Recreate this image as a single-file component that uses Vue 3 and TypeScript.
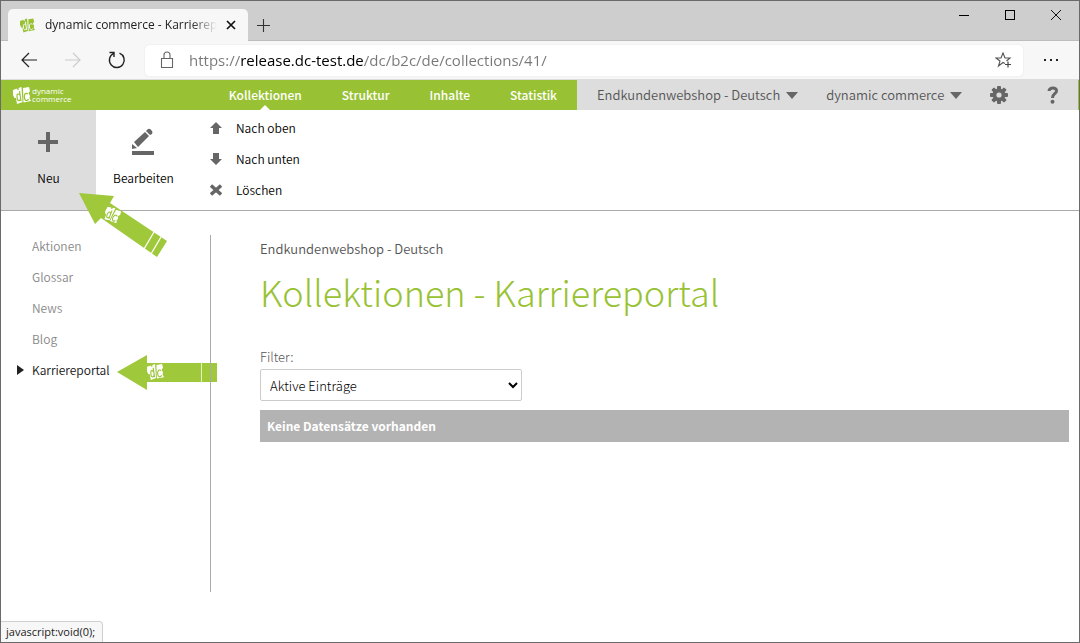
<script setup lang="ts">
import { ref } from 'vue'

const navItems: string[] = ['Kollektionen', 'Struktur', 'Inhalte', 'Statistik']
const activeNav = ref('Kollektionen')

const collections: string[] = ['Aktionen', 'Glossar', 'News', 'Blog', 'Karriereportal']
const activeCollection = ref('Karriereportal')

const url = ref('https://release.dc-test.de/dc/b2c/de/collections/41/')
const filter = ref('active')
</script>

<template>
  <div class="window">
    <svg class="defs" aria-hidden="true">
      <symbol id="dc-mark" viewBox="0 0 18 17">
        <path class="mark-fill" d="M0 3 L4 1.500 L4.500 3 L6 2.500 L5.500 1 L8.500 0 L9.500 15 L4 17 L3 11 L1.500 11 L0 8 Z" />
        <path class="mark-fill" d="M10 1 L16 0 L17 4 L15.500 6 L17 9 L16.500 11 L18 14 L10.500 15.500 Z" />
        <path class="mark-cut" d="M6.500 4 L8 14 M7 8 C4 5.500 3.500 8 4.300 12 C5 14.500 7 14 7.500 12" />
        <path class="mark-cut" d="M15 7 C12 5 10.800 8 11.500 11.500 C12.500 14.500 14.500 14 15.500 12" />
      </symbol>
    </svg>

    <header class="tabstrip">
      <div class="tab">
        <svg class="favicon" width="15" height="15"><use href="#dc-mark" /></svg>
        <span class="tab-title">dynamic commerce - Karriereportal</span>
        <button class="icon-btn tab-close" aria-label="Tab schließen">
          <svg width="10" height="10" viewBox="0 0 10 10"><path d="M1 1 L9 9 M9 1 L1 9" stroke="#111" stroke-width="1.7" /></svg>
        </button>
      </div>
      <button class="icon-btn new-tab" aria-label="Neuer Tab">
        <svg width="13" height="13" viewBox="0 0 13 13"><path d="M6.500 0 V13 M0 6.500 H13" stroke="#333" stroke-width="1.1" /></svg>
      </button>
      <div class="window-controls">
        <button class="icon-btn" aria-label="Minimieren">
          <svg width="12" height="12" viewBox="0 0 12 12"><path d="M1 6.500 H11" stroke="#000" /></svg>
        </button>
        <button class="icon-btn" aria-label="Maximieren">
          <svg width="12" height="12" viewBox="0 0 12 12"><rect x="1.500" y="1.500" width="9" height="9" fill="none" stroke="#000" /></svg>
        </button>
        <button class="icon-btn" aria-label="Schließen">
          <svg width="12" height="12" viewBox="0 0 12 12"><path d="M1 1 L11 11 M11 1 L1 11" stroke="#111" /></svg>
        </button>
      </div>
    </header>

    <div class="toolbar">
      <button class="icon-btn" aria-label="Zurück">
        <svg width="18" height="16" viewBox="0 0 18 16"><path d="M17 8 H2 M9 1 L2 8 L9 15" fill="none" stroke="#222" stroke-width="1.2" /></svg>
      </button>
      <button class="icon-btn" aria-label="Vorwärts" disabled>
        <svg width="18" height="16" viewBox="0 0 18 16"><path d="M1 8 H16 M9 1 L16 8 L9 15" fill="none" stroke="#ccc" stroke-width="1.2" /></svg>
      </button>
      <button class="icon-btn" aria-label="Neu laden">
        <svg width="18" height="18" viewBox="0 0 18 18"><path d="M11.500 2.200 A7.400 7.400 0 1 1 5.500 2.500 M1.500 1.500 H6 V6" fill="none" stroke="#222" stroke-width="1.400" /></svg>
      </button>
      <div class="address">
        <svg width="14" height="18" viewBox="0 0 14 18"><path d="M1.500 7.500 H12.500 V16.500 H1.500 Z M4 7 V4 A3 3 0 0 1 10 4 V7" fill="none" stroke="#666" stroke-width="1.1" /></svg>
        <input v-model="url" class="url" type="text" aria-label="Adresse" spellcheck="false" />
        <button class="icon-btn" aria-label="Zu Favoriten hinzufügen">
          <svg width="18" height="17" viewBox="0 0 18 17"><path d="M10 11.500 L8 10.500 L3.500 14 L5 9 L1 6 H6 L8 1 L10 6 H15 L11.500 9" fill="none" stroke="#555" stroke-width="1.1" /><path d="M13 9.500 V15.500 M10 12.500 H16" stroke="#444" stroke-width="1.200" /></svg>
        </button>
      </div>
      <button class="icon-btn more" aria-label="Einstellungen und mehr">
        <svg width="14" height="2" viewBox="0 0 14 2"><path d="M0 0 H2 V2 H0 Z M6 0 H8 V2 H6 Z M12 0 H14 V2 H12 Z" fill="#222" /></svg>
      </button>
    </div>

    <div class="appbar">
      <div class="brandbar">
        <a class="logo" href="#">
          <svg width="18" height="17"><use href="#dc-mark" /></svg>
          <span class="wordmark"><span>dynamic</span><span>commerce</span></span>
        </a>
        <nav class="mainnav">
          <a v-for="item in navItems" :key="item" href="#" :class="{ active: item === activeNav }" @click.prevent="activeNav = item">{{ item }}</a>
        </nav>
      </div>
      <div class="context">
        <button class="context-btn">Endkundenwebshop - Deutsch<i class="caret"></i></button>
        <button class="context-btn account">dynamic commerce<i class="caret"></i></button>
        <button class="icon-btn" aria-label="Einstellungen">
          <svg width="18" height="18" viewBox="-9 -9 18 18">
            <g fill="#666">
              <circle r="6.500" />
              <rect v-for="n in 4" :key="n" x="-2" y="-9" width="4" height="18" rx="1" :transform="`rotate(${n * 45})`" />
            </g>
            <circle r="2.600" fill="#ddd" />
          </svg>
        </button>
        <button class="icon-btn help" aria-label="Hilfe">
          <svg width="12" height="18" viewBox="0 0 12 18"><path d="M2 5 C2 1 10 1 9.500 5 C9.300 8 5.500 7.500 5.500 12" fill="none" stroke="#666" stroke-width="3" /><circle cx="5.500" cy="15.800" r="2" fill="#666" /></svg>
        </button>
      </div>
    </div>

    <div class="ribbon">
      <button class="big current">
        <svg width="32" height="32" viewBox="0 0 32 32"><path d="M13 6 H17 V14 H25 V18 H17 V26 H13 V18 H5 V14 H13 Z" fill="#666" /></svg>
        Neu
      </button>
      <button class="big">
        <svg width="32" height="32" viewBox="0 0 32 32">
          <path d="M4 25 H26 V29 H4 Z M4 18 L9 22 L4 23 Z M6 16 L17 6 L21 10 L10 21 Z M18 5 L20 3 Q22 2 24 5 Q25 6 24 8 L22 9 Z" fill="#666" />
        </svg>
        Bearbeiten
      </button>
      <div class="actions">
        <button>
          <svg width="12" height="12" viewBox="0 0 12 12"><path d="M6 0 L12 6 H9 V12 H3 V6 H0 Z" fill="#666" /></svg>
          Nach oben
        </button>
        <button>
          <svg width="12" height="12" viewBox="0 0 12 12"><path d="M6 12 L12 6 H9 V0 H3 V6 H0 Z" fill="#666" /></svg>
          Nach unten
        </button>
        <button>
          <svg width="12" height="12" viewBox="0 0 12 12"><path d="M1 1.500 L11 10.500 M11 1.500 L1 10.500" stroke="#666" stroke-width="3.400" /></svg>
          Löschen
        </button>
      </div>
    </div>

    <div class="body">
      <aside class="sidebar">
        <a v-for="name in collections" :key="name" href="#" :class="{ active: name === activeCollection }" @click.prevent="activeCollection = name">{{ name }}</a>
      </aside>
      <main class="content">
        <p class="crumb">Endkundenwebshop - Deutsch</p>
        <h1>Kollektionen - Karriereportal</h1>
        <label for="filter">Filter:</label>
        <select id="filter" v-model="filter">
          <option value="active">Aktive Einträge</option>
          <option value="all">Alle Einträge</option>
        </select>
        <div class="empty">Keine Datensätze vorhanden</div>
      </main>
    </div>

    <svg class="pointer pointer-new" width="90" height="66" viewBox="79 193 90 66" aria-hidden="true">
      <path d="M79 193 L114 196 L110 203 L167 241 L157 257 L101 218 L95 224 Z" fill="#9fc83b" />
      <path d="M154 232 L144 249 M161 237 L151 254" stroke="#fff" stroke-width="1.300" />
      <use href="#dc-mark" x="-8" y="-8" width="16" height="16" transform="translate(112 215) rotate(30)" />
    </svg>
    <svg class="pointer pointer-entry" width="100" height="36" viewBox="117 354 100 36" aria-hidden="true">
      <path d="M117 372 L147 355 V363 H217 V382 H147 V390 Z" fill="#9fc83b" />
      <path d="M201.500 362 V383" stroke="#e3f0c4" />
      <use href="#dc-mark" x="147" y="364" width="17" height="16" />
    </svg>

    <div class="status">javascript:void(0);</div>
  </div>
</template>

<style>
body {
  margin: 0;
}
</style>

<style scoped>
* {
  box-sizing: border-box;
}
.window {
  position: relative;
  display: flex;
  flex-direction: column;
  min-height: 100vh;
  border: 1px solid #6a6a6a;
  background: #fff;
  color: #222;
  font-family: "Noto Sans CJK SC", "Open Sans", sans-serif;
  font-size: 13px;
  line-height: 20px;
}
.defs {
  position: absolute;
  width: 0;
  height: 0;
}
.mark-fill {
  fill: var(--mark, #fff);
}
.mark-cut {
  fill: none;
  stroke: var(--cut, #98c234);
  stroke-width: 1.2;
}
button {
  padding: 0;
  border: 0;
  background: none;
  color: inherit;
  font: inherit;
}
a {
  color: inherit;
  text-decoration: none;
}
.icon-btn {
  display: flex;
  align-items: center;
  justify-content: center;
}
.tabstrip {
  display: flex;
  align-items: flex-end;
  height: 40px;
  padding-left: 7px;
  background: #cecece;
  box-shadow: inset 0 -1px #bdbdbd;
}
.tab {
  display: flex;
  align-items: center;
  width: 240px;
  height: 32px;
  padding: 0 12px;
  border-radius: 5px 5px 0 0;
  background: #f7f7f7;
}
.favicon {
  --mark: #98c234;
  --cut: #f7f7f7;
  margin-right: 10px;
  flex: none;
}
.tab-title {
  flex: 1;
  overflow: hidden;
  white-space: nowrap;
  font-family: "Open Sans", sans-serif;
  font-size: 12px;
  mask-image: linear-gradient(90deg, #000 85%, transparent);
}
.tab-close {
  margin-left: 9px;
}
.new-tab {
  width: 31px;
  height: 32px;
}
.window-controls {
  display: flex;
  align-self: flex-start;
  margin-left: auto;
}
.window-controls button {
  width: 46px;
  height: 28px;
}
.toolbar {
  display: flex;
  align-items: center;
  height: 39px;
  background: #f7f7f7;
  border-bottom: 1px solid #ddd;
}
.toolbar > .icon-btn {
  width: 44px;
  height: 36px;
}
.toolbar > .icon-btn:first-child {
  margin-left: 6px;
}
.address {
  display: flex;
  flex: 1;
  align-items: center;
  height: 31px;
  margin-left: 6px;
  padding: 0 10px 0 15px;
  border-radius: 4px;
  background: #fff;
  box-shadow: 0 0 1px #ccc;
}
.url {
  flex: 1;
  height: 28px;
  margin-left: 15px;
  padding: 0;
  border: 0;
  outline: 0;
  background: linear-gradient(90deg, #777 51px, #000 51px, #000 175px, #777 175px);
  background-clip: text;
  -webkit-text-fill-color: transparent;
  font-family: "Open Sans", sans-serif;
  font-size: 15px;
}
.toolbar > .more {
  width: 56px;
}
.appbar {
  display: flex;
  height: 30px;
  background: #ddd;
  border-right: 1px solid #98c234;
  white-space: nowrap;
}
.brandbar {
  display: flex;
  justify-content: space-between;
  width: 576px;
  background: #98c234;
  color: #fff;
}
.logo {
  display: flex;
  align-items: center;
  gap: 1px;
  padding-left: 12px;
  font-family: "Open Sans", sans-serif;
  font-size: 8px;
  line-height: 8px;
}
.wordmark {
  display: flex;
  flex-direction: column;
}
.mainnav {
  display: flex;
  font-size: 12px;
}
.mainnav a {
  position: relative;
  padding: 0 20px;
  font-weight: 500;
  line-height: 30px;
}
.mainnav .active::after {
  content: "";
  position: absolute;
  bottom: 0;
  left: 50%;
  margin-left: -5px;
  border: 5px solid transparent;
  border-top: 0;
  border-bottom-color: #fff;
}
.context {
  display: flex;
  flex: 1;
  align-items: center;
  padding: 0 19px 0 20px;
  color: #555;
  font-weight: 350;
}
.context-btn {
  display: flex;
  align-items: center;
  gap: 6px;
}
.account {
  margin: 0 28px;
}
.caret {
  border: 6px solid transparent;
  border-top: 7px solid #666;
  border-bottom: 0;
}
.help {
  margin-left: auto;
}
.ribbon {
  display: flex;
  height: 101px;
  border-bottom: 1px solid #aaa;
  color: #000;
  font-size: 12px;
  font-weight: 350;
}
.big {
  display: flex;
  flex-direction: column;
  align-items: center;
  gap: 10px;
  width: 95px;
  padding-top: 16px;
}
.big.current {
  background: #ddd;
}
.actions {
  display: flex;
  flex-direction: column;
  gap: 11px;
  padding: 8px 19px;
}
.actions button {
  display: flex;
  align-items: center;
  gap: 14px;
}
.body {
  display: flex;
  flex: 1;
  padding: 24px 10px 50px 0;
}
.sidebar {
  position: relative;
  z-index: 1;
  display: flex;
  flex-direction: column;
  gap: 11px;
  width: 210px;
  padding: 1px 0 0 31px;
  border-right: 1px solid #aaa;
  color: #888;
  font-size: 12px;
  font-weight: 350;
}
.sidebar a {
  position: relative;
}
.sidebar .active {
  color: #111;
}
.sidebar .active::before {
  content: "";
  position: absolute;
  top: 5px;
  left: -15px;
  border: 5px solid transparent;
  border-right: 0;
  border-left: 7px solid #222;
}
.content {
  display: flex;
  flex: 1;
  flex-direction: column;
  align-items: flex-start;
  padding: 4px 0 0 49px;
}
.crumb {
  margin: 0;
  color: #555;
  font-weight: 350;
}
h1 {
  margin: 7px 0 31px;
  color: #98c234;
  font-size: 36px;
  font-weight: 300;
  line-height: 50px;
}
label {
  color: #555;
  font-weight: 300;
}
select {
  width: 262px;
  height: 32px;
  margin: 2px 0 9px;
  padding: 0 0 0 5px;
  border: 1px solid #ccc;
  border-radius: 2px;
  background: #fff;
  color: #000;
  font: inherit;
  font-weight: 300;
}
.empty {
  align-self: stretch;
  padding: 0 7px;
  background: #b3b3b3;
  color: #fff;
  font-size: 12px;
  font-weight: 700;
  line-height: 32px;
}
.pointer {
  position: absolute;
}
.pointer-new {
  top: 192px;
  left: 78px;
}
.pointer-entry {
  top: 353px;
  left: 116px;
}
.status {
  position: absolute;
  bottom: 0;
  left: 0;
  padding: 0 7px 0 5px;
  border: 1px solid #d0d0d0;
  border-width: 1px 1px 0 0;
  border-radius: 0 4px 0 0;
  background: #f7f7f7;
  font-family: "Open Sans", sans-serif;
  font-size: 11px;
}
</style>
